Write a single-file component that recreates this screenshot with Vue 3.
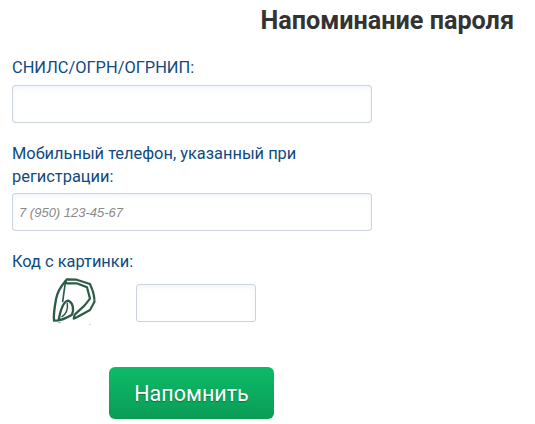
<script setup>
const title = 'Напоминание пароля'
</script>

<template>
  <div class="page">
    <h1 class="title">{{ title }}</h1>
    <form class="form" @submit.prevent>
      <label class="label one">СНИЛС/ОГРН/ОГРНИП:</label>
      <input class="field" type="text" />
      <label class="label two">Мобильный телефон, указанный при<br />регистрации:</label>
      <input class="field" type="text" placeholder="7 (950) 123-45-67" />
      <label class="label three">Код с картинки:</label>
      <div class="captcha-row">
        <svg class="captcha" viewBox="0 0 210 180" width="70" height="60" fill="none" stroke="#2a5c47" stroke-linecap="round" stroke-linejoin="round">
          <path d="M76 34 C62 50 52 66 48 88 C44 110 40 135 42 152 C58 152 80 144 96 134 C102 118 100 100 86 92 C72 92 62 118 56 150" stroke-width="7"/>
          <path d="M76 34 L80 28 L110 29 L150 42 C158 60 165 80 163 96 L150 120 L112 141 L101 146 L104 134 L134 106 L150 86 L141 52 L110 40 L80 40 L76 34" stroke-width="6.5"/>
          <path d="M76 38 L68 94" stroke-width="5"/>
          <path d="M66 140 C78 132 84 118 82 100" stroke-width="4.5"/>
          <path d="M163 92 L168 96 M150 163 L151 163 M55 158 L62 158" stroke-width="2" stroke="#6c8a7c"/>
        </svg>
        <input class="field small" type="text" />
      </div>
      <button class="submit" type="button">Напомнить</button>
    </form>
  </div>
</template>

<style scoped>
.page {
  width: 535px;
  height: 424px;
  overflow: hidden;
  background: #fff;
  font-family: Roboto, "Noto Sans", sans-serif;
}
.title {
  margin: 0;
  padding: 4px 21px 0 0;
  text-align: right;
  font-size: 25.2px;
  line-height: 33px;
  font-weight: 700;
  color: #333;
}
.form {
  display: flex;
  flex-direction: column;
  align-items: flex-start;
  padding-left: 12px;
}
.label {
  font-size: 16.4px;
  line-height: 23px;
  color: #0f4a80;
}
.one { margin-top: 19px; margin-bottom: 6px; }
.two { margin-top: 19px; margin-bottom: 5px; }
.three { margin-top: 19px; margin-bottom: 11px; }
.field {
  box-sizing: border-box;
  width: 360px;
  height: 38px;
  padding: 0 6px;
  border: 1px solid #ccd3dc;
  border-radius: 3px;
  background: #fff;
  box-shadow: inset 0 3px 5px rgba(200, 215, 235, 0.22);
  outline: none;
  font-family: "Liberation Sans", Arial, sans-serif;
  font-size: 13px;
}
.field::placeholder {
  color: #8a8a8a;
  font-style: italic;
  opacity: 1;
}
.captcha-row {
  display: flex;
  align-items: flex-start;
}
.captcha {
  display: block;
  margin: -14px 0 -8px 28px;
}
.small {
  width: 120px;
  margin-left: 26px;
}
.submit {
  width: 165px;
  height: 52px;
  margin: 45px 0 0 97px;
  border: none;
  border-radius: 6px;
  background: linear-gradient(180deg, #0dbb68 0%, #0a9c56 100%);
  color: #fff;
  font-family: Roboto, "Noto Sans", sans-serif;
  font-size: 21.5px;
  text-shadow: 0 1px 1px rgba(0, 70, 40, 0.5);
}
</style>
